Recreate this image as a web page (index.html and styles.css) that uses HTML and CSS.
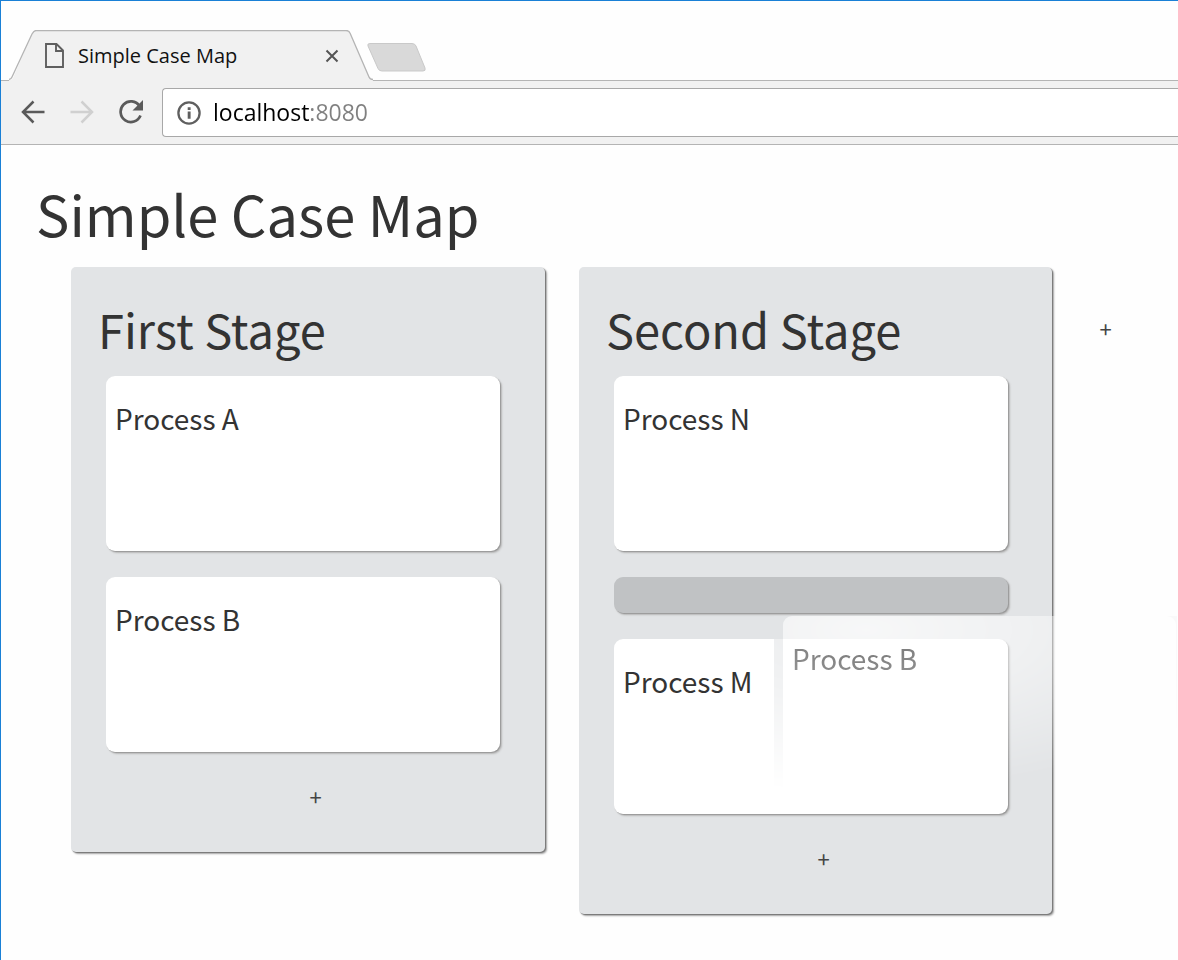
FILE: index.html
```
<!DOCTYPE html>
<html lang="en">
<head>
<meta charset="utf-8">
<title>Simple Case Map</title>
<link rel="stylesheet" href="styles.css">
</head>
<body>
<div class="window">
  <header class="tab-strip">
    <div class="tab">
      <svg class="tab-shape" width="364" height="51" viewBox="0 0 364 51" aria-hidden="true">
        <path d="M0 51V50Q3 50 4 48L23 4Q25 .5 27 .5H337Q340 .5 341 3L360 47Q361 49.500 364 49.500V51Z" fill="#f1f1f1"/>
        <path d="M0 49.500Q2 49.500 3 47L23 4Q25 .5 27 .5H337Q340 .5 341 3L360 47Q361 49.500 364 49.500" fill="none" stroke="#b4b4b4" stroke-width="1.300"/>
      </svg>
      <svg class="page-icon" width="19" height="25" viewBox="0 0 19 25" aria-hidden="true">
        <path d="M1 1H11.500L18 7.500V24H1ZM11 1V8H18" fill="none" stroke="#5f5f5f" stroke-width="1.900"/>
      </svg>
      <span class="tab-title">Simple Case Map</span>
      <button class="tab-close" aria-label="Close tab">
        <svg width="14" height="14" viewBox="0 0 14 14"><path d="M1.500 1.500L12.500 12.500M12.500 1.500L1.500 12.500" stroke="#555" stroke-width="2"/></svg>
      </button>
    </div>
    <button class="new-tab" aria-label="New tab">
      <svg width="60" height="30" viewBox="0 0 60 30"><path d="M3 .5H45Q48 .5 49 3L58 25Q59 28 56 28H15Q12 28 11 25.500L1 3Q0 .5 3 .5Z" fill="#d9d9d9" stroke="#c9c9c9"/></svg>
    </button>
  </header>
  <nav class="toolbar" aria-label="Browser">
    <button aria-label="Back"><svg width="24" height="24" viewBox="0 0 24 24"><path d="M23.500 12H2M12.500 1.500L2 12L12.500 22.500" fill="none" stroke="#5a5a5a" stroke-width="2.500"/></svg></button>
    <button aria-label="Forward" disabled><svg width="24" height="24" viewBox="0 0 24 24"><path d="M.5 12H22M11.500 1.500L22 12L11.500 22.500" fill="none" stroke="#d0d0d0" stroke-width="2.500"/></svg></button>
    <button aria-label="Reload"><svg width="24" height="24" viewBox="0 0 24 24"><path d="M20.500 6A10.300 10.300 0 1 0 21.500 15.500" fill="none" stroke="#5a5a5a" stroke-width="2.700"/><path d="M24 0V10.500H13.500Z" fill="#5a5a5a"/></svg></button>
    <div class="address">
      <svg width="24" height="24" viewBox="0 0 24 24" aria-hidden="true"><circle cx="12" cy="12" r="10.600" fill="none" stroke="#5f5f5f" stroke-width="2.300"/><path d="M10.700 6.300h2.900v2.600h-2.900zM10.700 10.500h2.900v7.300h-2.900z" fill="#5f5f5f"/></svg>
      <input class="url" type="text" value="localhost:8080" aria-label="Address">
    </div>
  </nav>
  <main class="page">
    <h1>Simple Case Map</h1>
    <div class="board">
      <section class="stage">
        <h2>First Stage</h2>
        <ul class="cards">
          <li class="card">Process A</li>
          <li class="card">Process B</li>
        </ul>
        <button class="add" aria-label="Add process">+</button>
      </section>
      <section class="stage">
        <h2>Second Stage</h2>
        <ul class="cards">
          <li class="card">Process N</li>
          <li class="drop-slot"></li>
          <li class="card">Process M
            <div class="drag-ghost"><div class="ghost-card">Process B</div></div>
          </li>
        </ul>
        <button class="add" aria-label="Add process">+</button>
      </section>
      <button class="add add-stage" aria-label="Add stage">+</button>
    </div>
  </main>
</div>
</body>
</html>
```
FILE: styles.css
```
* { box-sizing: border-box; }
body {
  margin: 0;
  background: #fefefe;
  color: #333;
  font-family: "Noto Sans CJK SC", "Open Sans", sans-serif;
}
button {
  display: block;
  margin: 0;
  padding: 0;
  border: 0;
  background: none;
  color: inherit;
  font: inherit;
}
svg { display: block; flex: none; }
.window {
  min-height: 100vh;
  overflow: hidden;
  border: 1px solid #1a80d6;
  border-width: 1px 0 0 1px;
}

.tab-strip {
  display: flex;
  height: 80px;
  padding: 29px 0 0 8px;
  border-bottom: 1px solid #b4b4b4;
}
.tab {
  position: relative;
  display: flex;
  align-items: center;
  width: 364px;
  height: 51px;
  padding: 0 34px 0 36px;
}
.tab-shape { position: absolute; left: 0; top: 0; }
.page-icon, .tab-title, .tab-close { position: relative; }
.tab-title {
  flex: 1;
  margin-left: 14px;
  color: #111;
  font: 20px/28px "Open Sans", sans-serif;
}
.new-tab { align-self: flex-start; margin: 13px 0 0 -6px; }

.toolbar {
  display: flex;
  align-items: center;
  gap: 25px;
  height: 64px;
  padding-left: 20px;
  border-bottom: 1px solid #b4b4b4;
  background: #f1f1f1;
}
.toolbar > button { padding-bottom: 2px; }
.address {
  display: flex;
  flex: 1;
  align-items: center;
  gap: 12px;
  height: 49px;
  margin-left: -6px;
  padding-left: 14px;
  border: 1px solid #a8a8a8;
  border-right: 0;
  border-radius: 4px 0 0 4px;
  background: #fff;
}
.url {
  flex: 1;
  min-width: 0;
  padding: 0 0 2px;
  border: 0;
  outline: 0;
  background: linear-gradient(90deg, #000 96px, #808080 96px);
  background-clip: text;
  color: transparent;
  font: 23px/36px "Open Sans", sans-serif;
}

.page { padding: 33px 0 45px 35px; }
h1, h2 { margin: 0; font-weight: 400; }
h1 { font-size: 56px; line-height: 70px; }
h2 { padding-left: 27px; font-size: 47px; line-height: 60px; }
.board {
  display: flex;
  align-items: flex-start;
  gap: 34px;
  margin: 19px 0 0 35px;
}
.stage {
  flex: 0 0 474px;
  padding: 32px 0 36px;
  border-radius: 5px;
  background: #e2e4e6;
  box-shadow: 1px 1px 1px #777, 2px 2px 2px #aaa;
}
.stage + .stage { flex-basis: 473px; }
.cards {
  display: grid;
  gap: 26px;
  margin: 17px 45px 28px 35px;
  padding: 0;
  list-style: none;
}
.stage + .stage .cards { margin-right: 44px; }
.card, .drop-slot {
  border-radius: 9px;
  box-shadow: 1px 1px 1px #999, 2px 2px 2px #bbb;
}
.card {
  position: relative;
  height: 175px;
  padding: 22px 9px;
  background: #fff;
  font-size: 28px;
  line-height: 40px;
}
.drop-slot { height: 36px; background: #c0c2c4; }
.add {
  width: 36px;
  height: 36px;
  padding: 0 3px 4px 0;
  color: #444;
  font-size: 22px;
  line-height: 32px;
}
.stage .add { margin-left: 228px; }
.add-stage { margin: 45px 0 0 3px; }

.drag-ghost {
  position: absolute;
  left: 160px;
  top: -23px;
  width: 403px;
  height: 176px;
  padding: 0 1px 0 9px;
  background: #e2e4e6;
  -webkit-mask-image: radial-gradient(ellipse 400px 164px at 92px 14px, rgba(0, 0, 0, .72), rgba(0, 0, 0, .48) 40%, transparent);
  mask-image: radial-gradient(ellipse 400px 164px at 92px 14px, rgba(0, 0, 0, .72), rgba(0, 0, 0, .48) 40%, transparent);
}
.ghost-card {
  height: 176px;
  padding: 22px 9px;
  border-radius: 9px 9px 0 0;
  background: #fff;
}
```
